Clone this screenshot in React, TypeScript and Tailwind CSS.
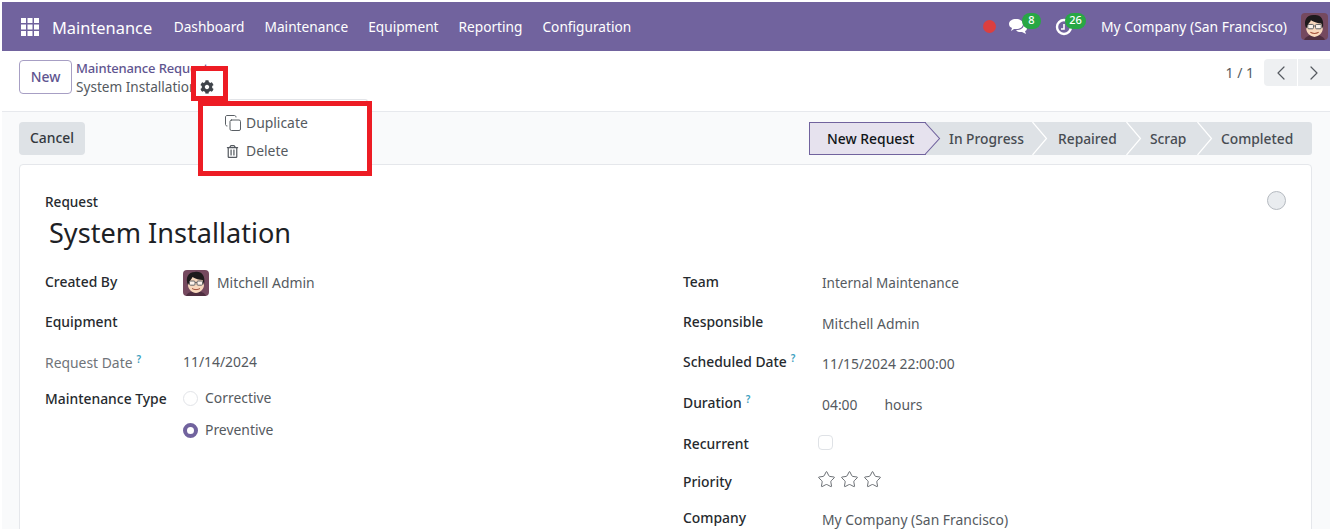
import React from "react";
import { Copy, ChevronLeft, ChevronRight, Star } from "lucide-react";
import { FaCog, FaRegTrashAlt } from "react-icons/fa";

const Avatar = ({ size }: { size: number }) => (
  <svg width={size} height={size} viewBox="0 0 26 26" className="shrink-0 rounded-[4px]">
    <rect width="26" height="26" fill="#75495f" />
    <path d="M3 26c1-3 5-5 10-5s9 2 10 5z" fill="#4f2f40" />
    <path d="M6 10c0-4 3-6 7-6s7 2 7 6l1 5c0 4-4 8-8 8s-8-4-8-8z" fill="#f8d8bd" />
    <path d="M5 15C2 8 5 2 12 2c6-1 11 3 9 13l-1.500-5c-3 0-7-1-10-3-.5 2-2.500 3-3 5z" fill="#1e1a1c" />
    <rect x="6.500" y="11" width="5.500" height="4.200" rx="1" fill="#fdf3ea" stroke="#55585c" strokeWidth="0.9" />
    <rect x="14" y="11" width="5.500" height="4.200" rx="1" fill="#fdf3ea" stroke="#55585c" strokeWidth="0.9" />
    <path d="M12 12.500h2" stroke="#55585c" strokeWidth="0.8" />
    <path d="M9 18.500c2.500 1.500 5.500 1.500 8 0" stroke="#a5543f" strokeWidth="1" fill="none" />
  </svg>
);

const Chevron = () => (
  <svg width="16" height="33" viewBox="0 0 16 33" className="absolute right-[-15px] top-0 z-10">
    <path d="M0.5 0L14.5 16.5L0.5 33" fill="none" stroke="#ffffff" strokeWidth="1.2" />
  </svg>
);

const Label = ({ children, muted }: { children: React.ReactNode; muted?: boolean }) => (
  <span className={muted ? "text-[13.9px] text-[#6f7479]" : "text-[13.9px] font-medium text-[#262a2e]"}>{children}</span>
);

const Help = () => <sup className="ml-[4px] text-[10px] font-semibold text-[#3d9fc0]">?</sup>;

const Value = ({ children }: { children: React.ReactNode }) => (
  <span className="text-[13.9px] text-[#555a60]">{children}</span>
);

export default function App() {
  return (
    <div className="relative h-[529px] w-[1330px] overflow-hidden bg-white pl-[2px] pt-[2px] font-['Noto_Sans',sans-serif]">
      <nav className="flex h-[49px] items-center bg-[#71639e] text-[13.7px] text-white">
        <svg width="18" height="18" viewBox="0 0 18 18" className="ml-[19px]" fill="#fff">
          {[0, 6.5, 13].map((y) =>
            [0, 6.5, 13].map((x) => <rect key={`${x}-${y}`} x={x} y={y} width="5" height="5" />)
          )}
        </svg>
        <span className="ml-[13px] pt-[3px] text-[16.4px]">Maintenance</span>
        <div className="ml-[21.500px] flex gap-[20px] pt-[1px]">
          <span>Dashboard</span>
          <span>Maintenance</span>
          <span>Equipment</span>
          <span>Reporting</span>
          <span>Configuration</span>
        </div>
        <div className="ml-auto mr-[2px] flex items-center">
          <span className="h-[13px] w-[13px] rounded-full bg-[#dc3f3f]" />
          <span className="relative ml-[12px] h-[18px] w-[20px]">
            <svg width="20" height="18" viewBox="0 0 20 18" fill="#fff">
              <path d="M8 1c4 0 7 2 7 5s-3 5-7 5H6l-3 2 1-3C2 9 1 8 1 6c0-3 3-5 7-5z" />
              <path d="M16 6c2 1 3 2 3 4s-1 3-2 3l1 3-4-2h-3c-1 0-2-1-3-2 5 0 8-2 8-6z" />
            </svg>
            <span className="absolute left-[14px] top-[-5px] flex h-[16px] w-[19px] items-center justify-center rounded-full bg-[#28a745] text-[11px] font-medium">8</span>
          </span>
          <span className="relative ml-[27px] h-[18px] w-[18px]">
            <svg width="18" height="18" viewBox="0 0 18 18" fill="none" stroke="#fff" strokeWidth="2.4">
              <circle cx="9" cy="9" r="7" />
              <path d="M9 6v5H6" strokeWidth="1.6" />
            </svg>
            <span className="absolute left-[10px] top-[-5px] flex h-[16px] w-[21px] items-center justify-center rounded-full bg-[#28a745] text-[11px] font-medium">26</span>
          </span>
          <span className="ml-[28px] pt-[2px] text-[13.9px]">My Company (San Francisco)</span>
          <span className="ml-[14px] flex"><Avatar size={27} /></span>
        </div>
      </nav>

      <header className="flex h-[61px] border-b border-[#e7e9ed] pl-[17px]">
        <button className="mt-[9px] h-[34px] w-[53px] rounded-[4px] border border-[#a79fc4] text-[13.9px] font-medium text-[#5f5590]">New</button>
        <div className="ml-[4px] mt-[8px] flex flex-col">
          <span className="text-[13px] font-medium leading-[18px] tracking-[-0.15px] text-[#5f5590]">Maintenance Requests</span>
          <span className="mt-[1px] text-[13.6px] leading-[18px] text-[#555a60]">System Installation</span>
        </div>
        <div className="ml-auto mt-[8px] flex h-[27px] items-center">
          <span className="text-[14px] text-[#555a60]">1 / 1</span>
          <div className="ml-[10px] flex h-[27px] gap-[1px]">
            <span className="flex w-[33px] items-center justify-center rounded-l-[4px] bg-[#eef0f2] text-[#555a60]"><ChevronLeft size={24} strokeWidth={1.2} /></span>
            <span className="flex w-[32px] items-center justify-center bg-[#eef0f2] text-[#555a60]"><ChevronRight size={24} strokeWidth={1.2} /></span>
          </div>
        </div>
      </header>

      <main className="h-[420px] bg-[#f9fafb] pl-[17px] pr-[18px] pt-[10px]">
        <div className="flex h-[33px] items-stretch justify-between">
          <button className="w-[66px] rounded-[4px] bg-[#dee2e6] text-[13.9px] font-medium text-[#33383d]">Cancel</button>
          <div className="flex rounded-r-[3px] bg-[#dee2e6] text-[13.8px] font-medium text-[#474c52]">
            <div className="relative flex w-[117px] items-center border-y border-l border-[#71639e] bg-[#e6e2ee] pl-[17px] pt-[1px] text-[13.9px] text-[#111518]">
              New Request
              <svg width="16" height="33" viewBox="0 0 16 33" className="absolute right-[-15px] top-[-1px] z-10">
                <path d="M0 0.5L14.5 16.5L0 32.5z" fill="#e6e2ee" />
                <path d="M0 0.5L14.5 16.5L0 32.5" fill="none" stroke="#71639e" strokeWidth="1.1" />
              </svg>
            </div>
            <div className="relative flex w-[107px] items-center pl-[23px] pt-[1px]">In Progress<Chevron /></div>
            <div className="relative flex w-[94px] items-center pl-[25px] pt-[1px]">Repaired<Chevron /></div>
            <div className="relative flex w-[71px] items-center pl-[23px] pt-[1px]">Scrap<Chevron /></div>
            <div className="flex w-[114px] items-center pl-[23px] pt-[1px]">Completed</div>
          </div>
        </div>

        <section className="relative mt-[9px] h-[400px] rounded-t-[4px] border border-[#e5e7eb] bg-white pl-[25px] pr-[25px] pt-[27px]">
          <span className="absolute right-[25px] top-[26px] h-[19px] w-[19px] rounded-full border border-[#b5bac0] bg-[#e9ecef]" />
          <div className="text-[13.6px] font-medium leading-[19px] text-[#262a2e]">Request</div>
          <h1 className="ml-[4px] mt-[2px] text-[27.1px] leading-[40px] text-[#1d2125]">System Installation</h1>

          <div className="mt-[18px] grid grid-cols-[638px_1fr]">
            <div className="flex flex-col">
              <div className="flex h-[41px] items-start">
                <span className="w-[138px] leading-[20px]"><Label>Created By</Label></span>
                <span className="mt-[-1px] flex items-center gap-[8px]"><Avatar size={26} /><Value>Mitchell Admin</Value></span>
              </div>
              <div className="flex h-[40px] items-start leading-[20px]"><Label>Equipment</Label></div>
              <div className="flex h-[36px] items-start leading-[20px]">
                <span className="w-[138px]"><Label muted>Request Date</Label><Help /></span>
                <Value>11/14/2024</Value>
              </div>
              <div className="flex h-[32px] items-start leading-[20px]">
                <span className="w-[138px]"><Label>Maintenance Type</Label></span>
                <span className="flex items-center gap-[7px]">
                  <span className="h-[15px] w-[15px] rounded-full border border-[#e2e4e8] bg-white" />
                  <Value>Corrective</Value>
                </span>
              </div>
              <div className="flex items-start pl-[138px] leading-[20px]">
                <span className="flex items-center gap-[7px]">
                  <span className="h-[15px] w-[15px] rounded-full border-[4px] border-[#71639e] bg-white" />
                  <Value>Preventive</Value>
                </span>
              </div>
            </div>

            <div className="flex flex-col leading-[20px]">
              <div className="flex h-[40px]">
                <span className="w-[139px]"><Label>Team</Label></span>
                <span className="mt-[2px] text-[13.55px] text-[#555a60]">Internal Maintenance</span>
              </div>
              <div className="flex h-[40px]">
                <span className="w-[139px]"><Label>Responsible</Label></span>
                <span className="mt-[2px]"><Value>Mitchell Admin</Value></span>
              </div>
              <div className="flex h-[41px]">
                <span className="w-[139px]"><Label>Scheduled Date</Label><Help /></span>
                <span className="mt-[2px]"><Value>11/15/2024 22:00:00</Value></span>
              </div>
              <div className="flex h-[41px]">
                <span className="w-[139px]"><Label>Duration</Label><Help /></span>
                <span className="mt-[3px] flex gap-[27px]"><Value>04:00</Value><Value>hours</Value></span>
              </div>
              <div className="flex h-[38px]">
                <span className="w-[135px]"><Label>Recurrent</Label></span>
                <span className="mt-[2px] h-[15px] w-[15px] rounded-[4px] border border-[#dfe2e6] bg-white" />
              </div>
              <div className="flex h-[36px]">
                <span className="w-[134px]"><Label>Priority</Label></span>
                <span className="mt-[-1px] flex h-[18px] gap-[4px] text-[#555a60]">
                  <Star size={19} strokeWidth={1.1} />
                  <Star size={19} strokeWidth={1.1} />
                  <Star size={19} strokeWidth={1.1} />
                </span>
              </div>
              <div className="flex">
                <span className="w-[139px]"><Label>Company</Label></span>
                <span className="mt-[2px]"><Value>My Company (San Francisco)</Value></span>
              </div>
            </div>
          </div>
        </section>
      </main>

      {/* Dropdown menu, with the red annotation frames lying over the page */}
      <div className="absolute left-[228px] top-[99px] z-10 h-[4px] w-[140px] rounded-t-[3px] border-x border-t border-[#e2e4e8] bg-white" />
      <div className="absolute left-[198px] top-[101px] z-20 flex h-[75px] w-[174px] flex-col gap-[6px] border-[5px] border-[#ed1c24] bg-white pl-[21px] pt-[6px] text-[13.9px] text-[#555a60]">
        <span className="flex h-[22px] items-center gap-[4px]"><Copy size={18} strokeWidth={1.3} />Duplicate</span>
        <span className="flex h-[22px] items-center gap-[6px]"><FaRegTrashAlt size={13} className="ml-[2px] mr-[1px]" />Delete</span>
      </div>
      <div className="absolute left-[191px] top-[66px] z-20 flex h-[35px] w-[37px] items-center justify-center border-[5px] border-[#ed1c24] bg-white pr-[5px] pt-[6px] text-[#3f444a]">
        <FaCog size={14} />
      </div>
    </div>
  );
}
